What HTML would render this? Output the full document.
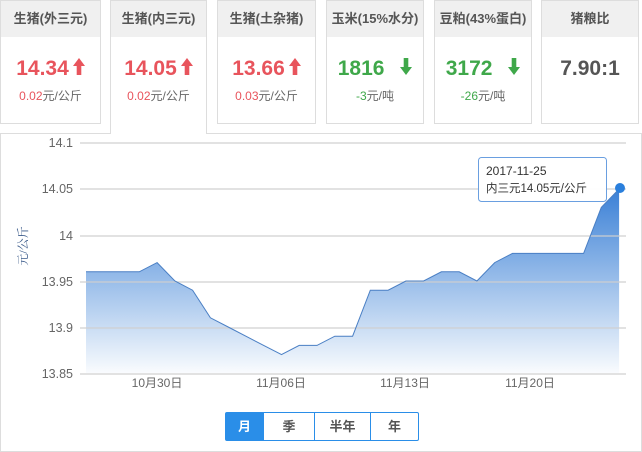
<!DOCTYPE html>
<html><head><meta charset="utf-8"><style>
*{margin:0;padding:0;box-sizing:border-box}
body{width:642px;height:452px;background:#fff;font-family:"Liberation Sans","Noto Sans CJK SC",sans-serif;position:relative;overflow:hidden}
.card{position:absolute;top:0;height:124px;border:1px solid #ddd;background:#fff;text-align:center}
.card .h{height:36px;background:#f0f0f0;line-height:36px;font-size:13px;font-weight:bold;color:#555}
.card .v{margin-top:19px;font-size:21px;font-weight:bold;line-height:26px;white-space:nowrap}
.card .v svg{vertical-align:0px;margin-left:4px}
.card .s{margin-top:5px;font-size:12px;color:#666}
.red{color:#e8545c}.grn{color:#3fa84a}
.panel{position:absolute;left:0;top:133px;width:642px;height:319px;border:1px solid #ddd}
.btns{position:absolute;left:225px;top:412px;height:29px;display:flex;border:1px solid #2a8ee8;border-radius:2px}
.btns div{height:27px;line-height:27px;text-align:center;font-size:13px;font-weight:bold;color:#555;border-left:1px solid #2a8ee8}
</style></head><body>
<div class="panel"></div>
<div class="card" style="left:0;width:101px"><div class="h">生猪(外三元)</div><div class="v red">14.34<svg width="12" height="17" viewBox="0 0 12 17"><path d="M6 0L12 8H8.3V17H3.7V8H0Z" fill="#e8545c"/></svg></div><div class="s"><span class="red">0.02</span>元/公斤</div></div>
<div class="card" style="left:110px;width:97px;height:134px;border-bottom:none;z-index:2"><div class="h">生猪(内三元)</div><div class="v red">14.05<svg width="12" height="17" viewBox="0 0 12 17"><path d="M6 0L12 8H8.3V17H3.7V8H0Z" fill="#e8545c"/></svg></div><div class="s"><span class="red">0.02</span>元/公斤</div></div>
<div class="card" style="left:217px;width:99px"><div class="h">生猪(土杂猪)</div><div class="v red">13.66<svg width="12" height="17" viewBox="0 0 12 17"><path d="M6 0L12 8H8.3V17H3.7V8H0Z" fill="#e8545c"/></svg></div><div class="s"><span class="red">0.03</span>元/公斤</div></div>
<div class="card" style="left:326px;width:98px"><div class="h">玉米(15%水分)</div><div class="v grn">1816 <svg style="margin-left:10px" width="12" height="17" viewBox="0 0 12 17"><path d="M6 17L12 9H8.3V0H3.7V9H0Z" fill="#3fa84a"/></svg></div><div class="s"><span class="grn">-3</span>元/吨</div></div>
<div class="card" style="left:434px;width:98px"><div class="h">豆粕(43%蛋白)</div><div class="v grn">3172 <svg style="margin-left:10px" width="12" height="17" viewBox="0 0 12 17"><path d="M6 17L12 9H8.3V0H3.7V9H0Z" fill="#3fa84a"/></svg></div><div class="s"><span class="grn">-26</span>元/吨</div></div>
<div class="card" style="left:541px;width:98px"><div class="h">猪粮比</div><div class="v" style="color:#555">7.90:1</div></div>
<svg style="position:absolute;left:0;top:0" width="642" height="452">
<defs><linearGradient id="g" gradientUnits="userSpaceOnUse" x1="0" y1="189" x2="0" y2="373"><stop offset="0" stop-color="#3a80d6"/><stop offset="1" stop-color="#3a80d6" stop-opacity="0.03"/></linearGradient></defs>
<path d="M86,373 L86,271.8 103.8,271.8 121.5,271.8 139.3,271.8 157.1,262.6 174.9,281 192.6,290.2 210.4,317.8 228.2,327 245.9,336.2 263.7,345.4 281.5,354.6 299.2,345.4 317,345.4 334.8,336.2 352.6,336.2 370.3,290.2 388.1,290.2 405.9,281 423.6,281 441.4,271.8 459.2,271.8 476.9,281 494.7,262.6 512.5,253.4 530.3,253.4 548,253.4 565.8,253.4 583.6,253.4 601.3,207.4 619.1,189 L619.1,373Z" fill="url(#g)"/>
<g stroke="#d0d0d0" stroke-width="1.5" stroke-opacity="0.8"><line x1="80" y1="143" x2="626" y2="143"/><line x1="80" y1="189" x2="626" y2="189"/><line x1="80" y1="236" x2="626" y2="236"/><line x1="80" y1="282" x2="626" y2="282"/><line x1="80" y1="328" x2="626" y2="328"/><line x1="80" y1="374" x2="626" y2="374"/></g>
<polyline fill="none" stroke="#4a7fc4" stroke-width="1" points="86,271.8 103.8,271.8 121.5,271.8 139.3,271.8 157.1,262.6 174.9,281 192.6,290.2 210.4,317.8 228.2,327 245.9,336.2 263.7,345.4 281.5,354.6 299.2,345.4 317,345.4 334.8,336.2 352.6,336.2 370.3,290.2 388.1,290.2 405.9,281 423.6,281 441.4,271.8 459.2,271.8 476.9,281 494.7,262.6 512.5,253.4 530.3,253.4 548,253.4 565.8,253.4 583.6,253.4 601.3,207.4 619.1,189"/>
<circle cx="620" cy="188" r="5" fill="#2a7fdc"/>
<g font-size="12.5" fill="#666" text-anchor="end"><text x="73" y="147">14.1</text><text x="73" y="193">14.05</text><text x="73" y="240">14</text><text x="73" y="286">13.95</text><text x="73" y="332">13.9</text><text x="73" y="378">13.85</text></g>
<g font-size="12" fill="#666" text-anchor="middle"><text x="157" y="387">10月30日</text><text x="281" y="387">11月06日</text><text x="405" y="387">11月13日</text><text x="530" y="387">11月20日</text></g>
<text transform="translate(27,246) rotate(-90)" font-size="12" fill="#3a5a8a" text-anchor="middle" font-family="Liberation Serif,Noto Serif CJK SC,serif">元/公斤</text>
<rect x="478.5" y="157.5" width="128" height="44" rx="3" fill="#fff" fill-opacity="0.95" stroke="#6a9fe0"/>
<text x="486" y="175" font-size="12" fill="#333">2017-11-25</text>
<text x="486" y="192" font-size="11.5" fill="#333">内三元14.05元/公斤</text>
</svg>
<div class="btns"><div style="width:37px;background:#2a8ee8;color:#fff;border-left:none">月</div><div style="width:51px">季</div><div style="width:56px">半年</div><div style="width:48px">年</div></div>
</body></html>
